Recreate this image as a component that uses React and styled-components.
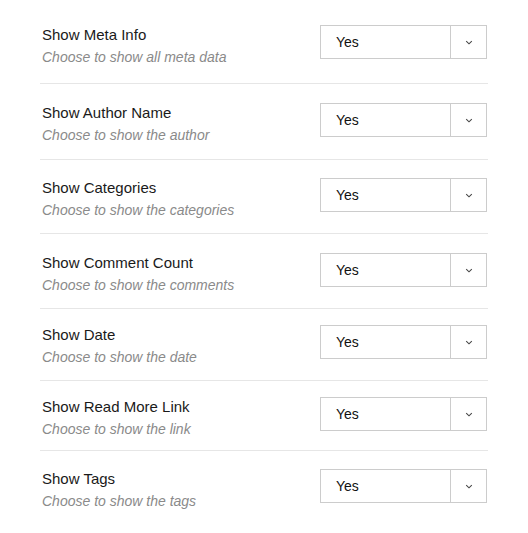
import React from 'react';
import styled, { createGlobalStyle } from 'styled-components';

// bottom padding is measured from the bottom of the label column
const rows = [
  { title: 'Show Meta Info', desc: 'Choose to show all meta data', top: 25, bottom: 18 },
  { title: 'Show Author Name', desc: 'Choose to show the author', top: 19, bottom: 16 },
  { title: 'Show Categories', desc: 'Choose to show the categories', top: 18, bottom: 15 },
  { title: 'Show Comment Count', desc: 'Choose to show the comments', top: 19, bottom: 15 },
  { title: 'Show Date', desc: 'Choose to show the date', top: 16, bottom: 15 },
  { title: 'Show Read More Link', desc: 'Choose to show the link', top: 16, bottom: 13 },
  { title: 'Show Tags', desc: 'Choose to show the tags', top: 18, bottom: 13, last: true },
];

function Chevron() {
  return (
    <svg width="8" height="5" viewBox="0 0 8 5">
      <path d="M1.2 1.2 L4 3.8 L6.8 1.2" fill="none" stroke="#444" strokeWidth="1.1" />
    </svg>
  );
}

function App() {
  return (
    <>
      <GlobalStyle />
      <Panel>
        {rows.map((r) => (
          <Row key={r.title} $top={r.top} $bottom={r.bottom} $last={r.last}>
            <Label>
              <Title>{r.title}</Title>
              <Desc>{r.desc}</Desc>
            </Label>
            <Select>
              <Value>Yes</Value>
              <Arrow>
                <Chevron />
              </Arrow>
            </Select>
          </Row>
        ))}
      </Panel>
    </>
  );
}

export default App;

const GlobalStyle = createGlobalStyle`
  body {
    margin: 0;
    background: #fff;
    font-family: "Liberation Sans", Arial, sans-serif;
  }
`;

const Panel = styled.div`
  width: 448px;
  margin: 0 40px;
`;

const Row = styled.div`
  display: flex;
  justify-content: space-between;
  align-items: flex-start;
  padding: ${(p) => p.$top}px 1px ${(p) => p.$bottom}px 2px;
  border-bottom: 1px solid ${(p) => (p.$last ? 'transparent' : '#e6e6e6')};
`;

const Label = styled.div`
  display: flex;
  flex-direction: column;
  padding-top: 1px;
`;

const Title = styled.div`
  font-size: 15px;
  line-height: 18px;
  color: #1a1a1a;
`;

const Desc = styled.div`
  margin-top: 5px;
  font-size: 14px;
  line-height: 16px;
  font-style: italic;
  color: #8a8a8a;
`;

const Select = styled.div`
  display: flex;
  width: 167px;
  height: 34px;
  box-sizing: border-box;
  border: 1px solid #cccccc;
  background: #fff;
`;

const Value = styled.div`
  flex: 1;
  display: flex;
  align-items: center;
  padding-left: 15px;
  font-size: 14px;
  color: #111;
  border-right: 1px solid #cccccc;
`;

const Arrow = styled.div`
  width: 35px;
  display: flex;
  align-items: center;
  justify-content: center;
`;
